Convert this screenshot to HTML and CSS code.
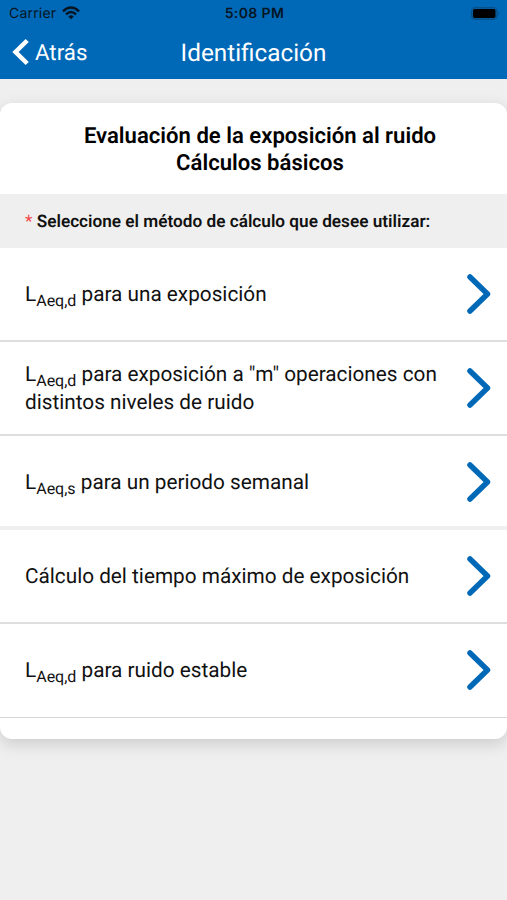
FILE: index.html
```html
<!DOCTYPE html>
<html lang="es">
<head>
<meta charset="utf-8">
<title>Identificación</title>
<link rel="stylesheet" href="styles.css">
</head>
<body>
<header class="header">
  <div class="status">
    <div class="carrier"><span>Carrier</span>
      <svg class="wifi" width="18" height="14" viewBox="0 0 18 14"><g fill="none" stroke="#071523" stroke-width="2.5"><path d="M1 5.3Q9-2.2 17 5.3"/><path d="M4 8.4Q9 3.7 14 8.4"/></g><path d="M6.3 10.4Q9 8.2 11.7 10.4L9 13.2Z" fill="#071523"/></svg>
    </div>
    <div class="time">5:08 PM</div>
    <svg class="battery" width="29" height="13" viewBox="0 0 29 13"><rect x=".75" y=".75" width="25" height="11.5" rx="3.5" fill="none" stroke="#07518b" stroke-width="1.5"/><rect x="2" y="2" width="22.5" height="9" rx="1.8"/><path d="M27 4.5Q29 6.5 27 8.5Z" fill="#07518b"/></svg>
  </div>
  <nav class="nav">
    <a class="back"><svg width="18" height="28" viewBox="0 0 18 28"><path d="M15.2 2.5L3.5 14L15.2 25.5" fill="none" stroke="#fff" stroke-width="4.5"/></svg><span>Atrás</span></a>
    <h1>Identificación</h1>
  </nav>
</header>
<main class="card">
  <h2>Evaluación de la exposición al ruido<br>Cálculos básicos</h2>
  <p class="prompt"><span class="star">*</span> Seleccione el método de cálculo que desee utilizar:</p>
  <ul class="list">
    <li><span class="label">L<sub>Aeq,d</sub> para una exposición</span><svg class="chev" viewBox="0 0 24 40"><path d="M3 3L20.5 20L3 37"/></svg></li>
    <li><span class="label">L<sub>Aeq,d</sub> para exposición a "m" operaciones con<br>distintos niveles de ruido</span><svg class="chev" viewBox="0 0 24 40"><path d="M3 3L20.5 20L3 37"/></svg></li>
    <li class="group-end"><span class="label">L<sub>Aeq,s</sub> para un periodo semanal</span><svg class="chev" viewBox="0 0 24 40"><path d="M3 3L20.5 20L3 37"/></svg></li>
    <li><span class="label">Cálculo del tiempo máximo de exposición</span><svg class="chev" viewBox="0 0 24 40"><path d="M3 3L20.5 20L3 37"/></svg></li>
    <li><span class="label">L<sub>Aeq,d</sub> para ruido estable</span><svg class="chev" viewBox="0 0 24 40"><path d="M3 3L20.5 20L3 37"/></svg></li>
  </ul>
</main>
</body>
</html>
```

FILE: styles.css
```css
* { box-sizing: border-box; }
body { margin: 0; min-height: 100vh; background: #efefef; color: #111; font-family: Roboto, sans-serif; text-rendering: geometricPrecision; }
.header { height: 79px; background: #0069b7; }
.status { height: 27px; padding: 0 7px 0 9px; display: grid; grid-template-columns: 1fr auto 1fr; align-items: center; font: 14px/27px Inter, sans-serif; color: #071523; }
.carrier { display: flex; align-items: center; gap: 6px; letter-spacing: .2px; }
.wifi { position: relative; top: -1px; }
.time { font-weight: 600; font-size: 14px; letter-spacing: .4px; }
.battery { justify-self: end; }
.nav { height: 52px; padding: 0 12px 2px; display: grid; grid-template-columns: 1fr auto 1fr; align-items: center; color: #fff; }
.back { display: flex; align-items: center; gap: 5px; font-size: 22.3px; }
.back span { padding-top: 1px; }
h1 { margin: 0; font-size: 24.3px; font-weight: 400; }
.card { margin-top: 24px; height: 636px; background: #fff; border-radius: 12px; overflow: hidden; box-shadow: 0 5px 16px rgba(0, 0, 0, .15); }
h2 { margin: 0; height: 91px; padding: 20px 0 0 13px; text-align: center; font-size: 22.1px; line-height: 27px; font-weight: 600; color: #000; }
.prompt { margin: 0; height: 54px; padding: 1px 0 0 25px; background: #efefef; font-size: 17.2px; line-height: 54px; font-weight: 600; }
.star { color: #f04a4a; font-weight: 400; }
.list { margin: 0; padding: 0; list-style: none; }
.list li { height: 94px; padding: 0 16px 0 25px; display: flex; align-items: center; justify-content: space-between; border-bottom: 2px solid #dedede; }
.list .group-end { border-bottom: 4px solid #efefef; padding-top: 2px; }
.list li:last-child { border-bottom-width: 1px; border-color: #d6d6d6; padding-bottom: 1px; }
.label { padding-top: 2px; font-size: 20.75px; line-height: 28px; white-space: nowrap; }
sub { font-size: 16px; line-height: 0; vertical-align: -5px; }
.chev { width: 24px; height: 40px; flex: none; fill: none; stroke: #0069b7; stroke-width: 5.5; stroke-linecap: round; stroke-linejoin: round; }
```
